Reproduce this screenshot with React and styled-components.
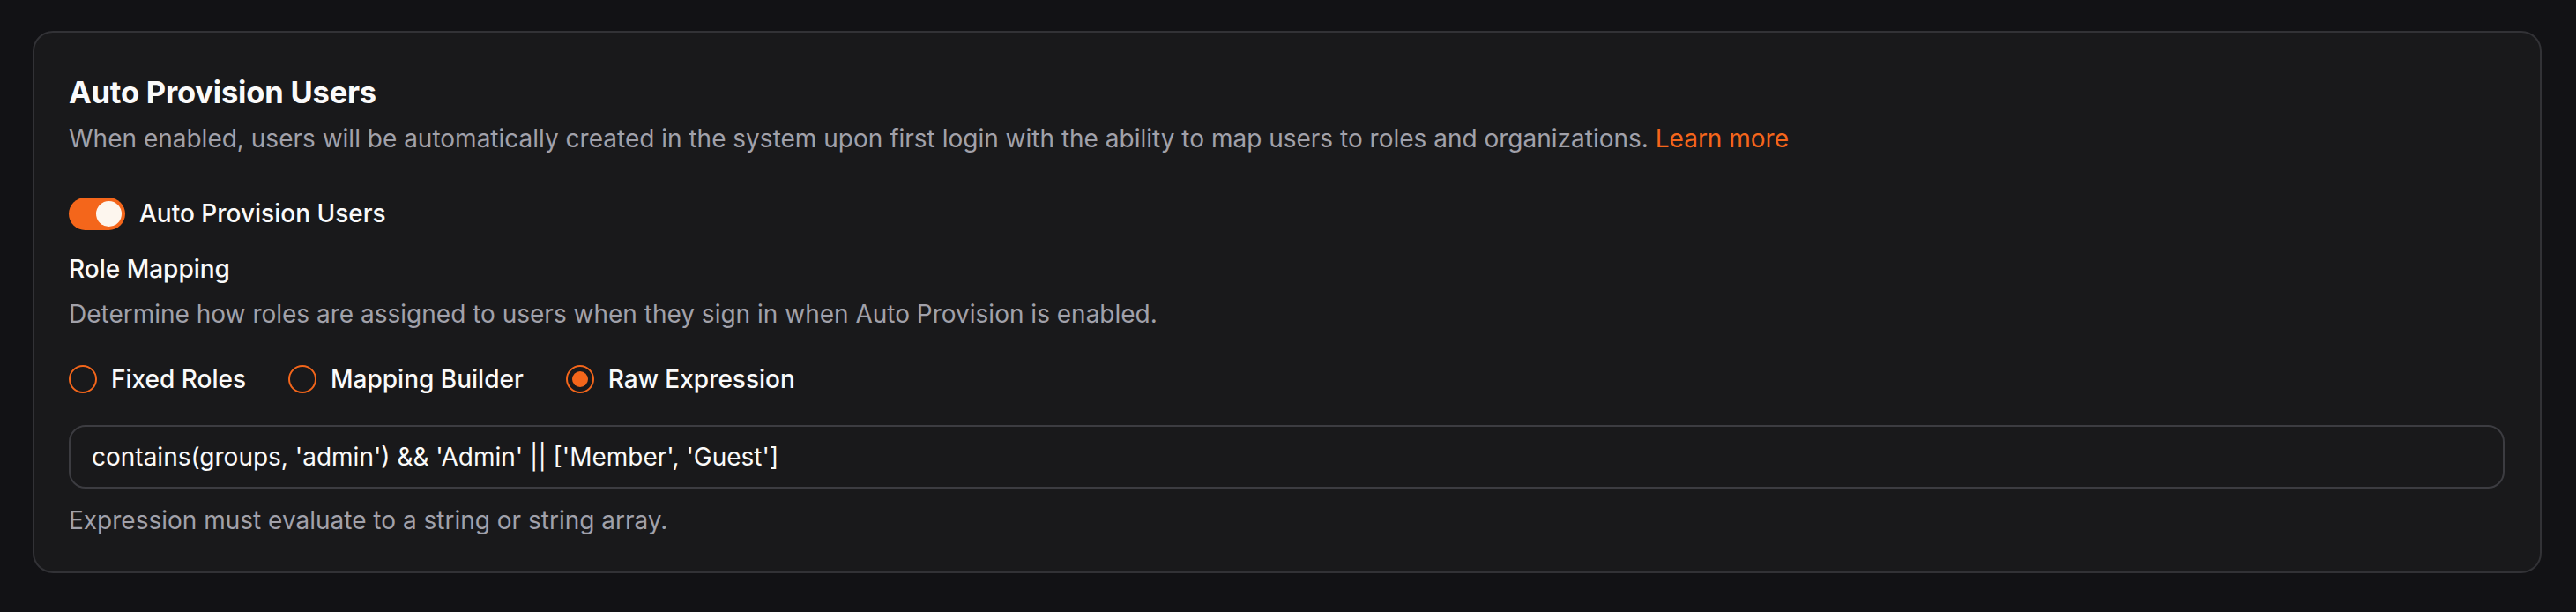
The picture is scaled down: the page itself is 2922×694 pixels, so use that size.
import React, { useState } from "react";
import styled, { createGlobalStyle } from "styled-components";

const GlobalStyle = createGlobalStyle`
  html, body {
    margin: 0;
    padding: 0;
    background: #121215;
  }
  body {
    font-family: Inter, "Noto Sans", "Liberation Sans", sans-serif;
    -webkit-font-smoothing: antialiased;
  }
`;

const ORANGE = "#f4661b";

const Page = styled.div`
  padding: 35px 39px 45px 37px;
  background: #121215;
`;

const Card = styled.section`
  background: #19191b;
  border: 2px solid #323236;
  border-radius: 23px;
  padding: 46px 40px 38px 39px;
  display: flex;
  flex-direction: column;
`;

const Title = styled.h2`
  margin: 0;
  font-size: 34.5px;
  line-height: 44px;
  font-weight: 700;
  color: #fafafa;
  letter-spacing: -0.2px;
`;

const Muted = styled.p`
  margin: ${(p) => p.$mt || 0}px 0 0;
  font-size: 28px;
  line-height: 40px;
  color: #a1a1aa;
`;

const Link = styled.a`
  color: ${ORANGE};
  text-decoration: none;
  cursor: pointer;
`;

const ToggleRow = styled.label`
  margin-top: 45px;
  display: flex;
  align-items: center;
  gap: 16px;
  height: 40px;
  cursor: pointer;
`;

const Track = styled.span`
  width: 64px;
  height: 37px;
  border-radius: 19px;
  background: ${(p) => (p.$on ? ORANGE : "#3f3f46")};
  display: flex;
  align-items: center;
  padding: 0 4px;
  box-sizing: border-box;
  justify-content: ${(p) => (p.$on ? "flex-end" : "flex-start")};
`;

const Knob = styled.span`
  width: 29px;
  height: 29px;
  border-radius: 50%;
  background: #fdf6ee;
`;

const Label = styled.span`
  font-size: 28px;
  line-height: 40px;
  font-weight: 500;
  color: #fafafa;
`;

const SectionLabel = styled.h3`
  margin: 23px 0 0;
  font-size: 28px;
  line-height: 40px;
  font-weight: 500;
  color: #fafafa;
`;

const RadioGroup = styled.div`
  margin-top: 34px;
  display: flex;
  align-items: center;
  gap: 48px;
  height: 40px;
`;

const RadioItem = styled.label`
  display: flex;
  align-items: center;
  gap: 16px;
  cursor: pointer;
`;

const RadioCircle = styled.span`
  width: 32px;
  height: 32px;
  box-sizing: border-box;
  border-radius: 50%;
  border: 2.5px solid ${ORANGE};
  display: flex;
  align-items: center;
  justify-content: center;

  &::after {
    content: "";
    width: 18px;
    height: 18px;
    border-radius: 50%;
    background: ${ORANGE};
    display: ${(p) => (p.$checked ? "block" : "none")};
  }
`;

const ExpressionInput = styled.input`
  margin-top: 32px;
  height: 72px;
  box-sizing: border-box;
  width: 100%;
  border: 2px solid #3c3c41;
  border-radius: 19px;
  background: #19191b;
  padding: 0 24px;
  font-family: Inter, "Noto Sans", "Liberation Sans", sans-serif;
  font-size: 28px;
  color: #fafafa;
  outline: none;
`;

const modes = ["Fixed Roles", "Mapping Builder", "Raw Expression"];

export default function App() {
  const [enabled, setEnabled] = useState(true);
  const [mode, setMode] = useState("Raw Expression");
  const [expr, setExpr] = useState(
    "contains(groups, 'admin') && 'Admin' || ['Member', 'Guest']"
  );

  return (
    <Page>
      <GlobalStyle />
      <Card>
        <Title>Auto Provision Users</Title>
        <Muted $mt={10}>
          When enabled, users will be automatically created in the system upon
          first login with the ability to map users to roles and organizations.{" "}
          <Link>Learn more</Link>
        </Muted>

        <ToggleRow onClick={() => setEnabled(!enabled)}>
          <Track $on={enabled}>
            <Knob />
          </Track>
          <Label>Auto Provision Users</Label>
        </ToggleRow>

        <SectionLabel>Role Mapping</SectionLabel>
        <Muted $mt={11}>
          Determine how roles are assigned to users when they sign in when Auto
          Provision is enabled.
        </Muted>

        <RadioGroup>
          {modes.map((m) => (
            <RadioItem key={m} onClick={() => setMode(m)}>
              <RadioCircle $checked={mode === m} />
              <Label>{m}</Label>
            </RadioItem>
          ))}
        </RadioGroup>

        <ExpressionInput value={expr} onChange={(e) => setExpr(e.target.value)} />
        <Muted $mt={16}>Expression must evaluate to a string or string array.</Muted>
      </Card>
    </Page>
  );
}
